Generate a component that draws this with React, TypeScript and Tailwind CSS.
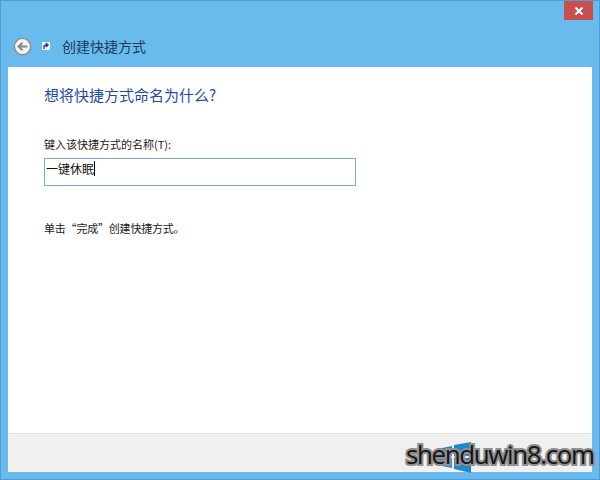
export default function App() {
  const cjk = { fontFamily: '"Noto Sans CJK SC", "Liberation Sans", sans-serif' };
  return (
    <div className="relative w-[600px] h-[480px] overflow-hidden flex flex-col bg-[#69bbee] border border-[#4c9fd6]" style={cjk}>
      <div className="h-[66px] shrink-0 flex flex-col">
        <div className="h-[20px] flex justify-end pr-[6px]">
          <div className="w-[29px] h-[19px] bg-[#c94f4f] flex items-center justify-center">
            <svg width="10" height="10" viewBox="0 0 10 10">
              <path d="M1.5 1.5 L8.5 8.5 M8.5 1.5 L1.5 8.5" stroke="#fff" strokeWidth="2" />
            </svg>
          </div>
        </div>
        <div className="flex items-center pl-[12px] mt-[6px] h-[38px]">
          <svg width="19" height="19" viewBox="0 0 19 19">
            <circle cx="9.5" cy="9.5" r="8.2" fill="#f4f4f2" stroke="#8f8f8b" strokeWidth="1.6" />
            <path d="M14.5 9.5 H6 M9.5 5.8 L5.6 9.5 L9.5 13.2" fill="none" stroke="#8a8a86" strokeWidth="2" />
          </svg>
          <svg className="ml-[10px]" width="8" height="8" viewBox="0 0 8 8">
            <rect width="8" height="8" fill="#f5f7fa" />
            <path d="M2 7 V4.5 C2 3.5 3 3 5 3 M3.8 1 L6 3 L3.8 5" fill="none" stroke="#16407a" strokeWidth="1.4" />
          </svg>
          <span className="ml-[12px] text-[14px] leading-[20px] text-[#1d3a55]">创建快捷方式</span>
        </div>
      </div>
      <div className="flex-1 mx-[7px] bg-white flex flex-col min-h-0">
        <div className="flex-1 pl-[36px] pt-[18px]">
          <div className="text-[15px] leading-[20px] text-[#1f4ba5]">想将快捷方式命名为什么?</div>
          <div className="mt-[31px] text-[11px] leading-[16px] text-[#1a1a1a]">键入该快捷方式的名称(T):</div>
          <div className="mt-[6px] w-[312px] h-[28px] border border-[#7ea6d4] flex items-start pt-[2px] pl-[1px]">
            <span className="text-[12px] leading-[16px] text-[#111]">一键休眠</span>
            <span className="w-px h-[15px] bg-black" />
          </div>
          <div className="mt-[34px] text-[11px] leading-[16px] text-[#1a1a1a] tracking-[-0.2px]">单击“完成”创建快捷方式。</div>
        </div>
        <div className="h-[39px] shrink-0 bg-[#f0f0f0] border-t border-[#dfdfdf]" />
      </div>
      <div className="h-[7px] shrink-0" />
      <svg className="absolute left-[436px] top-[441px]" width="34" height="31" viewBox="0 0 34 31">
        <path d="M0 7 L15 4 V14 H0 Z M17 3 L34 0 V14 H17 Z M0 16 H15 V26 L0 23 Z M17 16 H34 V31 L17 27 Z" fill="#1f87cf" />
      </svg>
      <span className="absolute left-[405px] top-[434px] text-[26px] leading-[38px] tracking-[-1.4px] text-[#151515] [-webkit-text-stroke:4px_#8f8f8f] [paint-order:stroke_fill]" style={{ fontFamily: '"Open Sans", sans-serif' }}>shenduwin8.com</span>
    </div>
  );
}
